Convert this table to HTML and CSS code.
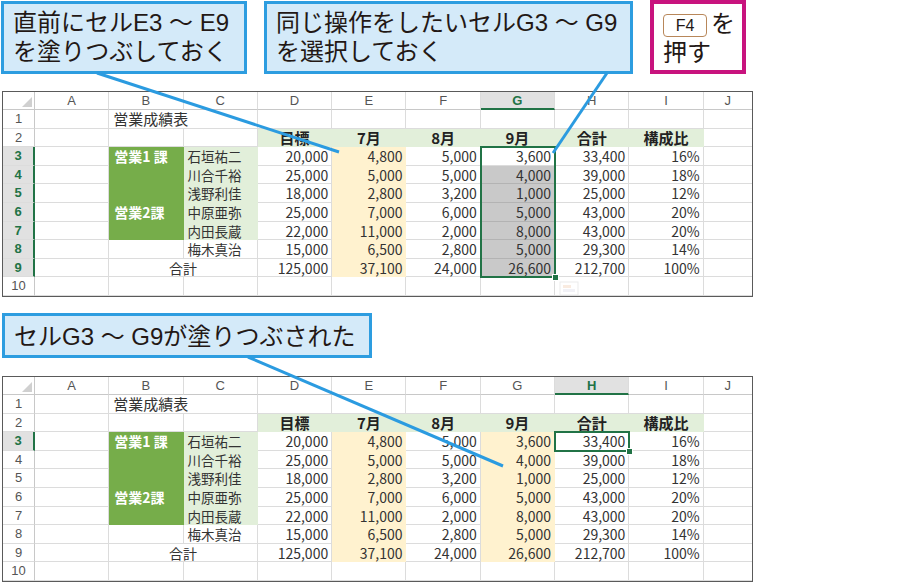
FILE: index.html
```html
<!DOCTYPE html>
<html lang="ja">
<head>
<meta charset="utf-8">
<title>F4で塗りつぶしを繰り返す</title>
<link rel="stylesheet" href="styles.css">
</head>
<body>
<div class="page">
  <div class="callouts">
    <div class="callout c1">直前にセルE3 ～ E9<br>を塗りつぶしておく</div>
    <div class="callout c2">同じ操作をしたいセルG3 ～ G9<br>を選択しておく</div>
    <div class="callout key"><span class="kbd">F4</span>を<br>押す</div>
  </div>

  <div class="sheet top-sheet">
    <div class="corner"><span class="tri"></span></div>
    <div class="ch">A</div><div class="ch">B</div><div class="ch">C</div><div class="ch">D</div><div class="ch">E</div><div class="ch">F</div><div class="ch sel">G</div><div class="ch">H</div><div class="ch">I</div><div class="ch last">J</div>

    <div class="rh">1</div><div class="c"></div><div class="c title span2">営業成績表</div><div class="c"></div><div class="c"></div><div class="c"></div><div class="c"></div><div class="c"></div><div class="c"></div><div class="c last"></div>

    <div class="rh">2</div><div class="c"></div><div class="c"></div><div class="c"></div><div class="c hd">目標</div><div class="c hd">7月</div><div class="c hd">8月</div><div class="c hd">9月</div><div class="c hd">合計</div><div class="c hd">構成比</div><div class="c last"></div>

    <div class="rh sel">3</div><div class="c"></div><div class="c dg">営業1 課</div><div class="c lg nm">石垣祐二</div><div class="c n">20,000</div><div class="c n pe">4,800</div><div class="c n">5,000</div><div class="c n">3,600</div><div class="c n">33,400</div><div class="c n">16%</div><div class="c last"></div>

    <div class="rh sel">4</div><div class="c"></div><div class="c dg"></div><div class="c lg nm">川合千裕</div><div class="c n">25,000</div><div class="c n pe">5,000</div><div class="c n">5,000</div><div class="c n gs">4,000</div><div class="c n">39,000</div><div class="c n">18%</div><div class="c last"></div>

    <div class="rh sel">5</div><div class="c"></div><div class="c dg"></div><div class="c lg nm">浅野利佳</div><div class="c n">18,000</div><div class="c n pe">2,800</div><div class="c n">3,200</div><div class="c n gs">1,000</div><div class="c n">25,000</div><div class="c n">12%</div><div class="c last"></div>

    <div class="rh sel">6</div><div class="c"></div><div class="c dg">営業2課</div><div class="c lg nm">中原亜弥</div><div class="c n">25,000</div><div class="c n pe">7,000</div><div class="c n">6,000</div><div class="c n gs">5,000</div><div class="c n">43,000</div><div class="c n">20%</div><div class="c last"></div>

    <div class="rh sel">7</div><div class="c"></div><div class="c dg"></div><div class="c lg nm">内田長蔵</div><div class="c n">22,000</div><div class="c n pe">11,000</div><div class="c n">2,000</div><div class="c n gs">8,000</div><div class="c n">43,000</div><div class="c n">20%</div><div class="c last"></div>

    <div class="rh sel">8</div><div class="c"></div><div class="c"></div><div class="c nm">梅木真治</div><div class="c n">15,000</div><div class="c n pe">6,500</div><div class="c n">2,800</div><div class="c n gs">5,000</div><div class="c n">29,300</div><div class="c n">14%</div><div class="c last"></div>

    <div class="rh sel">9</div><div class="c"></div><div class="c span2 ctr">合計</div><div class="c n">125,000</div><div class="c n pe">37,100</div><div class="c n">24,000</div><div class="c n gs">26,600</div><div class="c n">212,700</div><div class="c n">100%</div><div class="c last"></div>

    <div class="rh">10</div><div class="c"></div><div class="c"></div><div class="c"></div><div class="c"></div><div class="c"></div><div class="c"></div><div class="c"></div><div class="c"></div><div class="c"></div><div class="c last"></div>

    <div class="selbox sel-g"><span class="handle"></span></div>
    <div class="qa">
      <svg width="20" height="14" viewBox="0 0 20 14"><rect x="1" y="1" width="18" height="13" fill="none" stroke="#c9c9c9"/><rect x="4" y="4" width="8" height="3" fill="#f0c8a8"/><rect x="4" y="8" width="12" height="3" fill="#d8d8e8"/></svg>
    </div>
  </div>

  <div class="callout c4">セルG3 ～ G9が塗りつぶされた</div>

  <div class="sheet bottom-sheet">
    <div class="corner"><span class="tri"></span></div>
    <div class="ch">A</div><div class="ch">B</div><div class="ch">C</div><div class="ch">D</div><div class="ch">E</div><div class="ch">F</div><div class="ch">G</div><div class="ch sel">H</div><div class="ch">I</div><div class="ch last">J</div>

    <div class="rh">1</div><div class="c"></div><div class="c title span2">営業成績表</div><div class="c"></div><div class="c"></div><div class="c"></div><div class="c"></div><div class="c"></div><div class="c"></div><div class="c last"></div>

    <div class="rh">2</div><div class="c"></div><div class="c"></div><div class="c"></div><div class="c hd">目標</div><div class="c hd">7月</div><div class="c hd">8月</div><div class="c hd">9月</div><div class="c hd">合計</div><div class="c hd">構成比</div><div class="c last"></div>

    <div class="rh sel">3</div><div class="c"></div><div class="c dg">営業1 課</div><div class="c lg nm">石垣祐二</div><div class="c n">20,000</div><div class="c n pe">4,800</div><div class="c n">5,000</div><div class="c n pe">3,600</div><div class="c n">33,400</div><div class="c n">16%</div><div class="c last"></div>

    <div class="rh">4</div><div class="c"></div><div class="c dg"></div><div class="c lg nm">川合千裕</div><div class="c n">25,000</div><div class="c n pe">5,000</div><div class="c n">5,000</div><div class="c n pe">4,000</div><div class="c n">39,000</div><div class="c n">18%</div><div class="c last"></div>

    <div class="rh">5</div><div class="c"></div><div class="c dg"></div><div class="c lg nm">浅野利佳</div><div class="c n">18,000</div><div class="c n pe">2,800</div><div class="c n">3,200</div><div class="c n pe">1,000</div><div class="c n">25,000</div><div class="c n">12%</div><div class="c last"></div>

    <div class="rh">6</div><div class="c"></div><div class="c dg">営業2課</div><div class="c lg nm">中原亜弥</div><div class="c n">25,000</div><div class="c n pe">7,000</div><div class="c n">6,000</div><div class="c n pe">5,000</div><div class="c n">43,000</div><div class="c n">20%</div><div class="c last"></div>

    <div class="rh">7</div><div class="c"></div><div class="c dg"></div><div class="c lg nm">内田長蔵</div><div class="c n">22,000</div><div class="c n pe">11,000</div><div class="c n">2,000</div><div class="c n pe">8,000</div><div class="c n">43,000</div><div class="c n">20%</div><div class="c last"></div>

    <div class="rh">8</div><div class="c"></div><div class="c"></div><div class="c nm">梅木真治</div><div class="c n">15,000</div><div class="c n pe">6,500</div><div class="c n">2,800</div><div class="c n pe">5,000</div><div class="c n">29,300</div><div class="c n">14%</div><div class="c last"></div>

    <div class="rh">9</div><div class="c"></div><div class="c span2 ctr">合計</div><div class="c n">125,000</div><div class="c n pe">37,100</div><div class="c n">24,000</div><div class="c n pe">26,600</div><div class="c n">212,700</div><div class="c n">100%</div><div class="c last"></div>

    <div class="rh">10</div><div class="c"></div><div class="c"></div><div class="c"></div><div class="c"></div><div class="c"></div><div class="c"></div><div class="c"></div><div class="c"></div><div class="c"></div><div class="c last"></div>

    <div class="selbox sel-h"><span class="handle"></span></div>
  </div>

  <svg class="connectors" width="902" height="582" viewBox="0 0 902 582">
    <line x1="97" y1="73" x2="339" y2="152" />
    <line x1="607" y1="73" x2="553" y2="153" />
    <line x1="248" y1="357" x2="503" y2="466" />
  </svg>
</div>
</body>
</html>
```

FILE: styles.css
```css
* {
  box-sizing: border-box;
}

html,
body {
  margin: 0;
  background: #ffffff;
}

body {
  font-family: "Noto Sans CJK JP", "Noto Sans", sans-serif;
  color: #231815;
}

.page {
  position: relative;
  width: 902px;
  height: 582px;
  overflow: hidden;
}

/* ---------- callouts ---------- */
.callouts {
  display: flex;
  align-items: flex-start;
  height: 74px;
  padding-left: 1px;
}

.callout {
  background: #d4eaf9;
  border: 3px solid #2d9de0;
  font-family: "Liberation Sans", "Noto Sans CJK JP", sans-serif;
  font-size: 24px;
  line-height: 29px;
  padding: 4px 0 0 9px;
  white-space: nowrap;
  color: #231815;
}

.c1 {
  width: 246px;
  height: 73px;
  margin-top: 1px;
}

.c2 {
  width: 369px;
  height: 73px;
  margin-top: 1px;
  margin-left: 17px;
}

.key {
  width: 96px;
  height: 74px;
  margin-left: 17px;
  background: #ffffff;
  border: 4px solid #c8137e;
  padding: 5px 0 0 9px;
}

.kbd {
  display: inline-block;
  width: 44px;
  height: 23px;
  margin-right: 4px;
  border: 1px solid #b8875a;
  border-radius: 4px;
  font-family: "Liberation Sans", sans-serif;
  font-size: 16px;
  line-height: 21px;
  text-align: center;
  vertical-align: 1px;
  color: #231815;
}

.c4 {
  width: 370px;
  height: 45px;
  margin: 16px 0 0 2px;
  padding-top: 6px;
}

/* ---------- spreadsheet ---------- */
.sheet {
  position: relative;
  display: grid;
  grid-template-columns: 32px repeat(9, 74.3px) 1fr;
  grid-template-rows: 18px repeat(10, 18.6px);
  width: 751px;
  margin: 17px 0 0 2px;
  border: 1px solid #5a5a5a;
  background: #ffffff;
  overflow: hidden;
}

.bottom-sheet {
  margin-top: 18px;
}

.corner {
  display: flex;
  align-items: flex-end;
  justify-content: flex-end;
  border-right: 1px solid #c8c8c8;
  border-bottom: 1px solid #c8c8c8;
  padding: 0 2px 2px 0;
}

.tri {
  width: 0;
  height: 0;
  border-left: 10px solid transparent;
  border-bottom: 10px solid #d0d0d0;
}

.ch {
  font-family: "Liberation Sans", sans-serif;
  font-size: 13px;
  line-height: 17px;
  color: #555555;
  text-align: center;
  border-right: 1px solid #dcdcdc;
  border-bottom: 1px solid #c8c8c8;
}

.ch.sel {
  background: #e1e1e1;
  color: #217346;
  font-weight: bold;
  border-bottom: 2px solid #217346;
}

.rh {
  font-family: "Liberation Sans", sans-serif;
  font-size: 13px;
  line-height: 18px;
  color: #555555;
  text-align: center;
  border-right: 1px solid #c8c8c8;
  border-bottom: 1px solid #dcdcdc;
}

.rh.sel {
  background: #e1e1e1;
  color: #217346;
  font-weight: bold;
  border-right: 2px solid #217346;
}

.c {
  font-size: 14px;
  line-height: 18px;
  color: #333333;
  white-space: nowrap;
  padding: 0 3px;
  border-right: 1px solid #dcdcdc;
  border-bottom: 1px solid #dcdcdc;
}

.last {
  border-right: none;
}

.span2 {
  grid-column: span 2;
}

.title {
  font-size: 15px;
  padding-left: 4px;
}

.ctr {
  text-align: center;
}

.n {
  text-align: right;
}

.nm {
  font-size: 13.5px;
  padding-left: 4px;
}

.hd {
  background: #e2efda;
  border-color: transparent;
  font-weight: bold;
  font-size: 15px;
  text-align: center;
  color: #222222;
}

.dg {
  background: #76ad4a;
  border-color: transparent;
  color: #ffffff;
  font-weight: bold;
  padding-left: 5px;
}

.lg {
  background: #e2efda;
  border-color: transparent;
}

.pe {
  background: #fff2cf;
  border-color: transparent;
}

.gs {
  background: #c9c9c9;
  border-right-color: transparent;
  border-bottom-color: #b3b3b3;
}

/* selection overlays */
.selbox {
  position: absolute;
  top: -1px;
  left: -1px;
  right: -1px;
  bottom: -1px;
  border: 2px solid #217346;
  pointer-events: none;
}

.sel-g {
  grid-column: 8 / 9;
  grid-row: 4 / 11;
}

.sel-h {
  grid-column: 9 / 10;
  grid-row: 4 / 5;
}

.handle {
  position: absolute;
  right: -5px;
  bottom: -5px;
  width: 7px;
  height: 7px;
  background: #217346;
  border: 1px solid #ffffff;
}

.qa {
  position: absolute;
  grid-column: 9 / 10;
  grid-row: 11 / 12;
  left: 4px;
  top: 4px;
  opacity: 0.35;
}

.qa svg {
  display: block;
}

/* connector lines */
.connectors {
  position: absolute;
  top: 0;
  left: 0;
  pointer-events: none;
}

.connectors line {
  stroke: #2b9be0;
  stroke-width: 3;
}
```
